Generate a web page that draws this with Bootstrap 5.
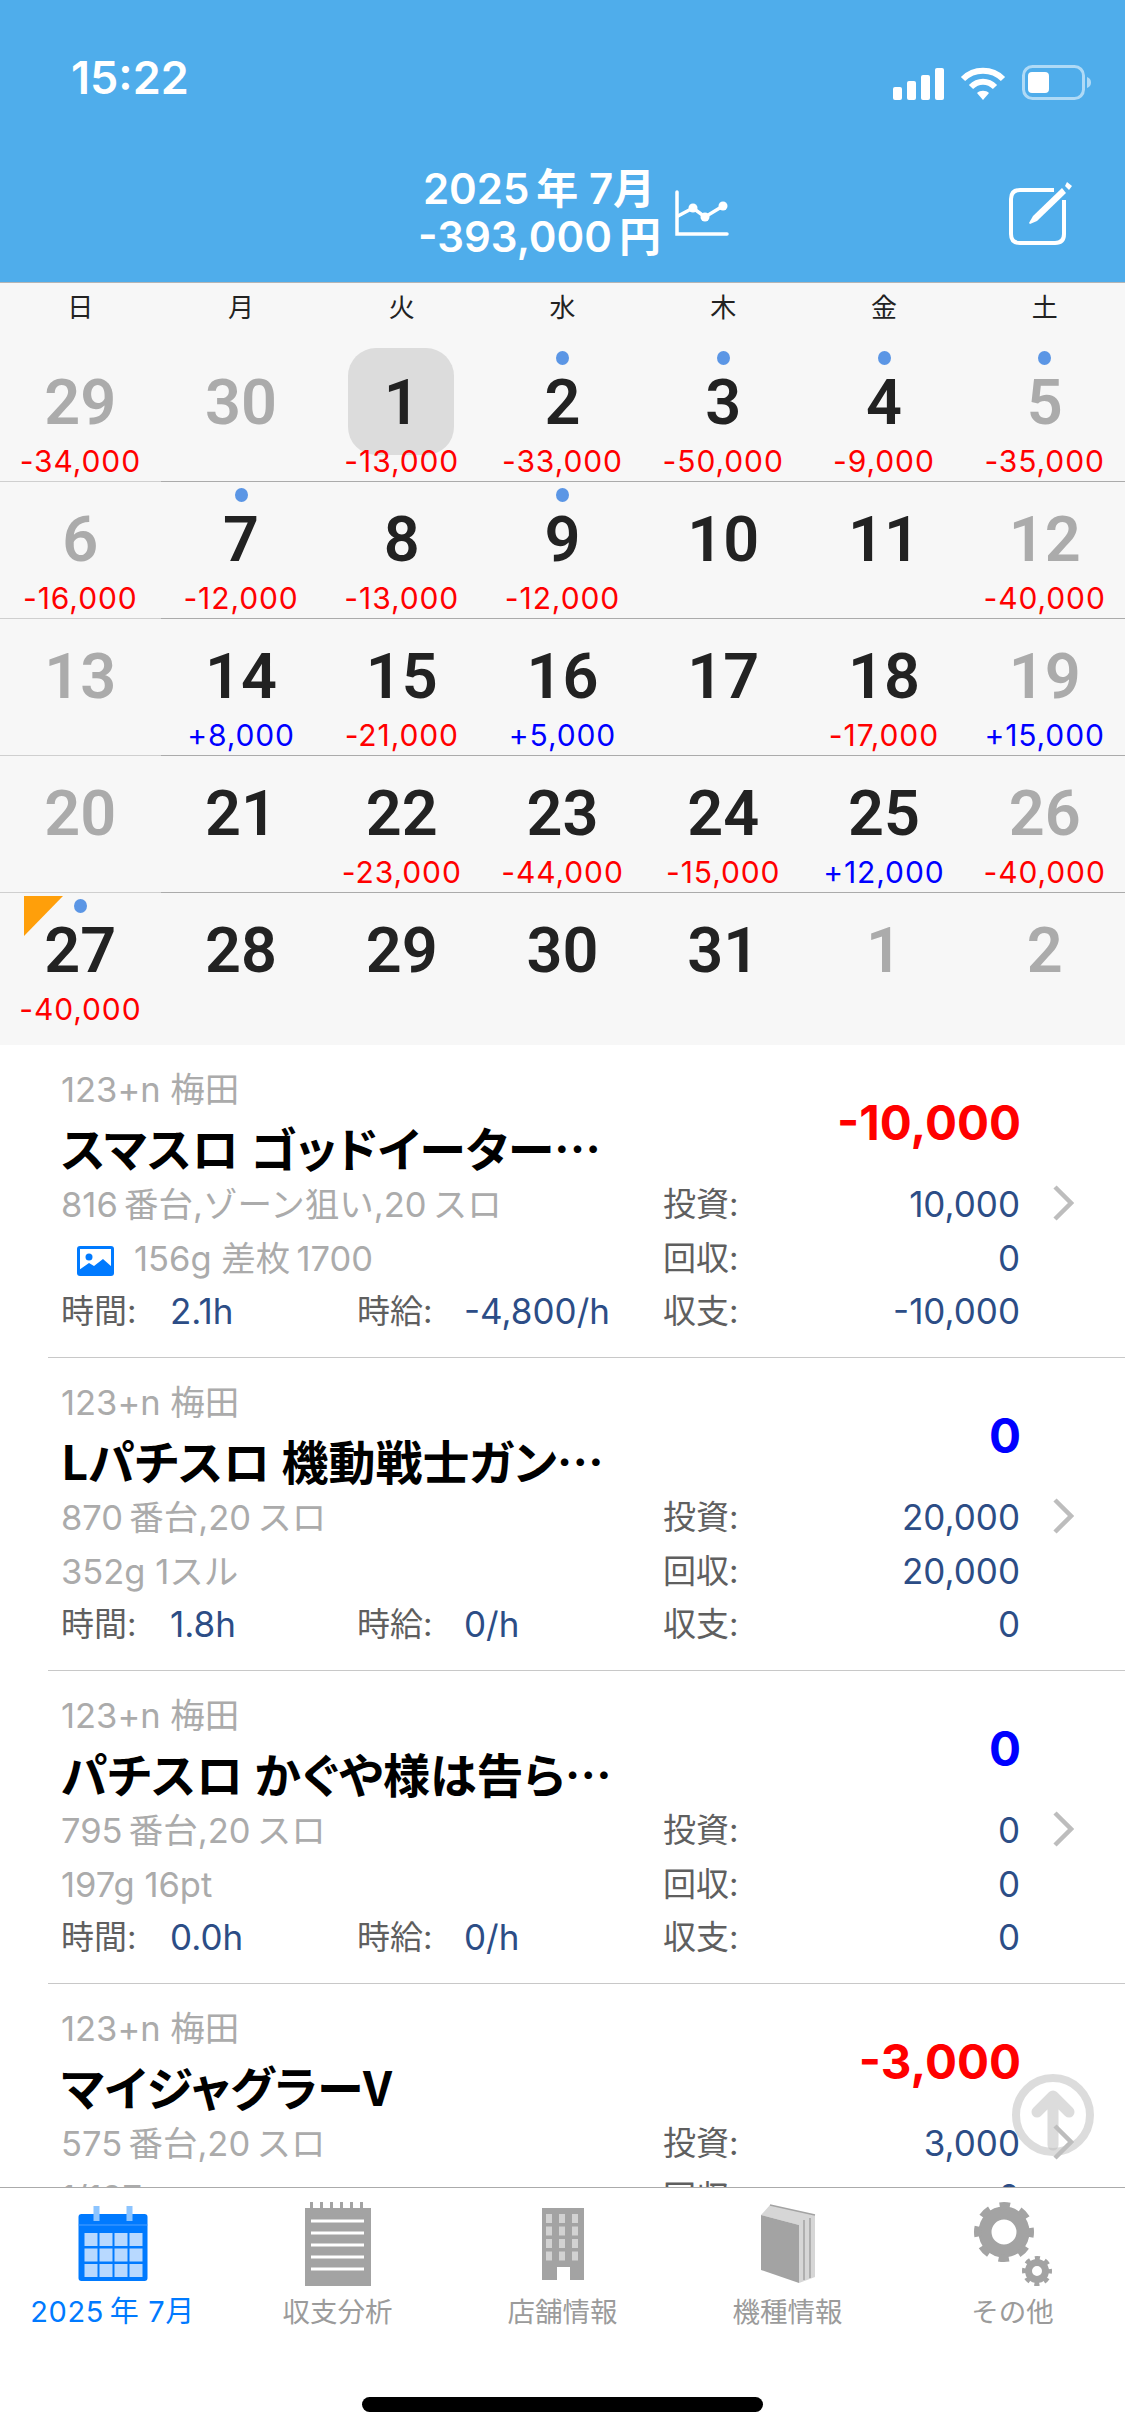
<!DOCTYPE html>
<html lang="ja">
<head>
    <title>収支カレンダー</title>
    <meta name="viewport" content="width=device-width, initial-scale=1">
    <link href="https://cdn.jsdelivr.net/npm/bootstrap@5.3.0/dist/css/bootstrap.min.css" rel="stylesheet">
    <script src="https://cdn.jsdelivr.net/npm/bootstrap@5.3.0/dist/js/bootstrap.bundle.min.js"></script>

    <style>
        html, body {
            height: 100%;
            overflow: hidden;
        }
        body {
            background: #fff;
            font-family: Inter, "Noto Sans CJK JP", sans-serif;
            font-size: 33px;
        }
        .top-bar {
            height: 283px;
            flex: none;
            background: #4fadeb;
            border-bottom: 1px solid #b5b5b5;
            color: #fff;
        }
        .status-row {
            height: 132px;
            padding: 0 34px 32px 71px;
        }
        .clock {
            font-size: 45px;
            font-weight: 600;
            line-height: 1;
        }
        .title-row {
            padding: 33px 53px 0 418px;
        }
        .month-text {
            font-size: 42px;
            font-weight: 600;
            line-height: 48px;
            text-align: center;
            width: 242px;
            white-space: nowrap;
        }
        .chart-icon {
            margin: 25px 0 0 15px;
        }
        .edit-icon {
            margin-top: 17px;
        }
        .cal {
            flex: none;
            background: #f7f7f7;
        }
        .cal-grid {
            display: grid;
            grid-template-columns: repeat(7, 1fr);
        }
        .wd {
            height: 62px;
            font-size: 26px;
            line-height: 50px;
            text-align: center;
            color: #222;
        }
        .day-cell {
            position: relative;
            height: 137px;
            padding-top: 20px;
            text-align: center;
            border-bottom: 1px solid #ababab;
        }
        .day-cell.sun {
            border-bottom-color: #cfcfcf;
        }
        .day-cell.last-row {
            height: 152px;
            border-bottom: 0;
        }
        .day-no {
            position: relative;
            font-family: Roboto, sans-serif;
            font-size: 63px;
            font-weight: 600;
            line-height: 76px;
            color: #222;
        }
        .day-no.off {
            color: #ababab;
        }
        .day-money {
            position: relative;
            margin-top: 2px;
            font-size: 30px;
            line-height: 36px;
            letter-spacing: .9px;
            white-space: nowrap;
        }
        .minus {
            color: #f00;
        }
        .plus {
            color: #00f;
        }
        .today-box {
            position: absolute;
            left: 27px;
            top: 3px;
            width: 106px;
            height: 107px;
            border-radius: 28px;
            background: #dcdcdc;
        }
        .ev-dot {
            position: absolute;
            left: 74px;
            top: 6px;
            width: 13px;
            height: 14px;
            border-radius: 50%;
            background: #5b96e5;
        }
        .corner-flag {
            position: absolute;
            left: 24px;
            top: 3px;
            width: 39px;
            height: 40px;
            background: #ff9f0a;
            clip-path: polygon(0 0, 100% 0, 0 100%);
        }
        .list-area {
            position: relative;
            flex: 1 1 0;
            min-height: 0;
            overflow: hidden;
        }
        .entry {
            height: 313px;
            margin-left: 48px;
            padding-left: 13px;
            border-bottom: 1px solid #c8c8c8;
            line-height: 53.5px;
        }
        .entry-top {
            height: 133px;
            padding-top: 25px;
            padding-right: 104px;
        }
        .store {
            color: #ababab;
            font-size: 34.5px;
            line-height: 40px;
        }
        .game {
            margin-top: 5px;
            font-family: "Noto Sans CJK JP", Inter, sans-serif;
            font-size: 47px;
            font-weight: 700;
            line-height: 64px;
            color: #000;
            white-space: nowrap;
            font-feature-settings: "palt";
        }
        .amount {
            margin-top: 27px;
            font-size: 47.5px;
            font-weight: 700;
            line-height: 52px;
        }
        .info-left {
            width: 602px;
            flex: none;
            white-space: nowrap;
        }
        .info-right {
            width: 357px;
            flex: none;
        }
        .grey-text {
            color: #ababab;
            font-size: 34.5px;
        }
        .lbl {
            color: #5f5f5f;
        }
        .val {
            color: #2c4d86;
            font-size: 35px;
        }
        .w-time {
            width: 109px;
        }
        .w-val {
            width: 187px;
        }
        .w-hour {
            width: 107px;
        }
        .pic-icon {
            margin: 0 20px 0 16px;
            vertical-align: -5px;
        }
        .chev {
            margin: -4px 0 0 32px;
            align-self: center;
        }
        .to-top {
            position: absolute;
            right: 30px;
            bottom: 30px;
        }
        .tab-bar {
            height: 249px;
            flex: none;
            background: #fff;
            border-top: 1px solid #ababab;
            padding-top: 12px;
        }
        .tab-item {
            width: 225px;
            text-align: center;
            font-size: 27.5px;
            line-height: 40px;
            color: #9b9b9b;
        }
        .tab-item svg {
            display: block;
            margin: 0 auto 6px;
        }
        .tab-item.on {
            color: #007aff;
            font-size: 29px;
            letter-spacing: .6px;
            white-space: nowrap;
        }
        .home-bar {
            width: 401px;
            height: 15px;
            margin: 65px auto 0;
            border-radius: 8px;
            background: #000;
        }
    </style>
</head>
<body>
<div class="d-flex flex-column vh-100">
    <!-- header -->
    <div class="top-bar">
        <div class="status-row d-flex align-items-end justify-content-between">
            <div class="clock">15:22</div>
            <div class="d-flex align-items-end gap-3">
                <svg width="51" height="32" viewBox="0 0 51 32"><g fill="#fff"><rect x="0" y="19" width="9" height="13" rx="2"/><rect x="14" y="13" width="9" height="19" rx="2"/><rect x="28" y="7" width="9" height="25" rx="2"/><rect x="42" y="0" width="9" height="32" rx="2"/></g></svg>
                <svg width="46" height="33" viewBox="0 0 46 33"><g fill="none" stroke="#fff" stroke-width="6"><path d="M3 12 C14 1 32 1 43 12"/><path d="M11 20 C18 13 28 13 35 20"/></g><path d="M17 26 C20 23 26 23 29 26 L23 33 Z" fill="#fff"/></svg>
                <svg width="69" height="35" viewBox="0 0 69 35"><rect x="1.5" y="1.5" width="60" height="32" rx="9" fill="none" stroke="#fff" stroke-opacity=".55" stroke-width="3"/><rect x="6" y="7" width="21" height="21" rx="4" fill="#fff"/><path d="M65 12 C68 13 69 15 69 17.5 C69 20 68 22 65 23 Z" fill="#fff" fill-opacity=".55"/></svg>
            </div>
        </div>
        <div class="title-row d-flex align-items-start">
            <div class="month-text">2025&#8201;年 7月<br>-393,000&#8201;円</div>
            <svg class="chart-icon" width="54" height="46" viewBox="0 0 54 46"><g fill="none" stroke="#fff" stroke-width="3.5" stroke-linecap="round"><path d="M2 2 V44 H52"/><path d="M3 26 L18 18 L30 27 L48 16"/></g><g fill="#fff"><circle cx="18" cy="18" r="4.5"/><circle cx="30" cy="27" r="4.5"/><circle cx="48" cy="16" r="4.5"/></g></svg>
            <svg class="edit-icon ms-auto" width="63" height="63" viewBox="0 0 63 63"><path d="M45 8 H11 Q2 8 2 17 V52 Q2 61 11 61 H46 Q55 61 55 52 V18" fill="none" stroke="#fff" stroke-width="4"/><path d="M53 6 L57 11 L28 39 L21 42 L20 41 L24 34 Z" fill="#fff"/><path d="M58 0 L63 4 L60 8 L56 4 Z" fill="#fff"/></svg>
        </div>
    </div>

    <!-- calendar -->
    <div class="cal">
        <div class="cal-grid" id="weekRow"></div>
        <div class="cal-grid" id="dayGrid"></div>
    </div>

    <!-- records -->
    <div class="list-area">
        <div id="entryList"></div>
        <svg class="to-top" width="84" height="84" viewBox="0 0 84 84"><g fill="none" stroke="#c0c0c0" stroke-opacity=".55" stroke-linecap="round" stroke-linejoin="round"><circle cx="42" cy="42" r="37" stroke-width="8"/><path d="M42 72 V24 M26 39 L42 23 L58 39" stroke-width="11"/></g></svg>
    </div>

    <!-- tabs -->
    <div class="tab-bar">
        <div class="d-flex">
            <div class="tab-item on">
                <svg width="100" height="86" viewBox="0 0 100 86">
                    <rect x="15.500" y="14" width="69" height="67" rx="3" fill="#007aff"/>
                    <path d="M15.500 25 H84.500" stroke="#4fa0ff" stroke-width="1"/>
                    <g fill="#8cc4ff"><rect x="30.500" y="6" width="6" height="15"/><rect x="63.500" y="6" width="6" height="15"/></g>
                    <g fill="#b8d9ff" id="calCells"></g>
                </svg>
                2025&#8201;年 7月
            </div>
            <div class="tab-item">
                <svg width="100" height="86" viewBox="0 0 100 86">
                    <path d="M17 8 H22 V2 H25 V8 H32 V2 H35 V8 H42 V2 H45 V8 H52 V2 H55 V8 H62 V2 H65 V8 H72 V2 H75 V8 H83 V86 H17 Z" fill="#a3a3a3"/>
                    <g stroke="#fff" stroke-width="3"><path d="M23 21 H76"/><path d="M23 33 H76"/><path d="M23 45 H76"/><path d="M23 57 H76"/><path d="M23 69 H76"/></g>
                </svg>
                収支分析
            </div>
            <div class="tab-item">
                <svg width="100" height="86" viewBox="0 0 100 86">
                    <rect x="29" y="8" width="42" height="72" fill="#a3a3a3"/>
                    <g fill="#d2d2d2" id="bldWindows"></g>
                    <rect x="44" y="67" width="13" height="13" fill="#fff"/>
                </svg>
                店舗情報
            </div>
            <div class="tab-item">
                <svg width="100" height="86" viewBox="0 0 100 86">
                    <path d="M23 15 L32 5 L77 15 V77 L61 83 V25 Z" fill="#d6d6d6"/>
                    <path d="M23 15 L61 25 V83 L23 70 Z" fill="#a3a3a3"/>
                    <path d="M32 5 L77 15 M66 20 V80 M72 18 V78" stroke="#a3a3a3" stroke-width="1.500" fill="none"/>
                </svg>
                機種情報
            </div>
            <div class="tab-item">
                <svg width="100" height="86" viewBox="0 0 100 86">
                    <g fill="none" stroke="#a3a3a3">
                        <circle cx="41" cy="32" r="19" stroke-width="13"/>
                        <circle cx="41" cy="32" r="26.500" stroke-width="7" stroke-dasharray="10.400 10.410" stroke-dashoffset="5.200"/>
                        <circle cx="74" cy="71" r="8.500" stroke-width="7"/>
                        <circle cx="74" cy="71" r="12.500" stroke-width="5" stroke-dasharray="4.900 4.917" stroke-dashoffset="2.450"/>
                    </g>
                </svg>
                その他
            </div>
        </div>
        <div class="home-bar"></div>
    </div>
</div>

<script>
    const weekDays = ["日", "月", "火", "水", "木", "金", "土"];
    // [day, money, dot, off]
    const days = [
        [29, "-34,000", 0, 1], [30, "", 0, 1], [1, "-13,000", 0, 0], [2, "-33,000", 1, 0], [3, "-50,000", 1, 0], [4, "-9,000", 1, 0], [5, "-35,000", 1, 1],
        [6, "-16,000", 0, 1], [7, "-12,000", 1, 0], [8, "-13,000", 0, 0], [9, "-12,000", 1, 0], [10, "", 0, 0], [11, "", 0, 0], [12, "-40,000", 0, 1],
        [13, "", 0, 1], [14, "+8,000", 0, 0], [15, "-21,000", 0, 0], [16, "+5,000", 0, 0], [17, "", 0, 0], [18, "-17,000", 0, 0], [19, "+15,000", 0, 1],
        [20, "", 0, 1], [21, "", 0, 0], [22, "-23,000", 0, 0], [23, "-44,000", 0, 0], [24, "-15,000", 0, 0], [25, "+12,000", 0, 0], [26, "-40,000", 0, 1],
        [27, "-40,000", 1, 0], [28, "", 0, 0], [29, "", 0, 0], [30, "", 0, 0], [31, "", 0, 0], [1, "", 0, 1], [2, "", 0, 1]
    ];
    const entries = [
        { game: "スマスロ ゴッドイーター…", amount: "-10,000", seat: "816\u2009番台,ゾーン狙い,20\u2009スロ", memo: "156g 差枚\u20091700", pic: true, inv: "10,000", back: "0", hours: "2.1h", rate: "-4,800/h", net: "-10,000" },
        { game: "Lパチスロ 機動戦士ガン…", amount: "0", seat: "870\u2009番台,20\u2009スロ", memo: "352g 1スル", inv: "20,000", back: "20,000", hours: "1.8h", rate: "0/h", net: "0" },
        { game: "パチスロ かぐや様は告ら…", amount: "0", seat: "795\u2009番台,20\u2009スロ", memo: "197g 16pt", inv: "0", back: "0", hours: "0.0h", rate: "0/h", net: "0" },
        { game: "マイジャグラーV", amount: "-3,000", seat: "575\u2009番台,20\u2009スロ", memo: "1/127", inv: "3,000", back: "0" }
    ];

    document.getElementById("weekRow").innerHTML = weekDays.map(d => `<div class="wd">${d}</div>`).join("");

    document.getElementById("dayGrid").innerHTML = days.map((d, i) => {
        const cls = (i % 7 === 0 ? " sun" : "") + (i >= 28 ? " last-row" : "");
        const money = d[1] ? `<div class="day-money ${d[1][0] === "-" ? "minus" : "plus"}">${d[1]}</div>` : "";
        return `<div class="day-cell${cls}">` +
            (i === 2 ? `<div class="today-box"></div>` : "") +
            (i === 28 ? `<div class="corner-flag"></div>` : "") +
            (d[2] ? `<div class="ev-dot"></div>` : "") +
            `<div class="day-no${d[3] ? " off" : ""}">${d[0]}</div>${money}</div>`;
    }).join("");

    const picIcon = `<svg class="pic-icon" width="37" height="30" viewBox="0 0 37 30"><rect width="37" height="30" rx="3" fill="#007aff"/><rect x="3" y="3" width="31" height="21" fill="#fff"/><circle cx="12" cy="11" r="3.500" fill="#007aff"/><path d="M2 24 L12 17 L17 20 L26 13 L35 21 V28 H2 Z" fill="#007aff"/></svg>`;
    const chevron = `<svg class="chev" width="22" height="36" viewBox="0 0 22 36"><path d="M3 2 L19 18 L3 34" fill="none" stroke="#bdbdbd" stroke-width="4.500"/></svg>`;

    document.getElementById("entryList").innerHTML = entries.map(e => `
        <div class="entry">
            <div class="entry-top d-flex justify-content-between">
                <div>
                    <div class="store">123+n 梅田</div>
                    <div class="game">${e.game}</div>
                </div>
                <div class="amount ${e.amount[0] === "-" ? "minus" : "plus"}">${e.amount}</div>
            </div>
            <div class="d-flex">
                <div class="info-left grey-text">${e.seat}</div>
                <div class="info-right d-flex justify-content-between"><span class="lbl">投資:</span><span class="val">${e.inv}</span></div>
                ${chevron}
            </div>
            <div class="d-flex">
                <div class="info-left grey-text">${e.pic ? picIcon : ""}${e.memo}</div>
                <div class="info-right d-flex justify-content-between"><span class="lbl">回収:</span><span class="val">${e.back}</span></div>
            </div>
            ${e.hours ? `<div class="d-flex">
                <div class="info-left d-flex">
                    <span class="lbl w-time">時間:</span><span class="val w-val">${e.hours}</span>
                    <span class="lbl w-hour">時給:</span><span class="val">${e.rate}</span>
                </div>
                <div class="info-right d-flex justify-content-between"><span class="lbl">収支:</span><span class="val">${e.net}</span></div>
            </div>` : ""}
        </div>`).join("");

    // tab icon details
    let cells = "";
    for (let r = 0; r < 3; r++) {
        for (let c = 0; c < 4; c++) {
            cells += `<rect x="${21.5 + c * 15}" y="${33 + r * 15.5}" width="13" height="13"/>`;
        }
    }
    document.getElementById("calCells").innerHTML = cells;

    let windows = "";
    for (let r = 0; r < 4; r++) {
        for (let c = 0; c < 3; c++) {
            windows += `<rect x="${33 + c * 13}" y="${14 + r * 12.5}" width="6" height="9"/>`;
        }
    }
    document.getElementById("bldWindows").innerHTML = windows;
</script>

</body>
</html>
